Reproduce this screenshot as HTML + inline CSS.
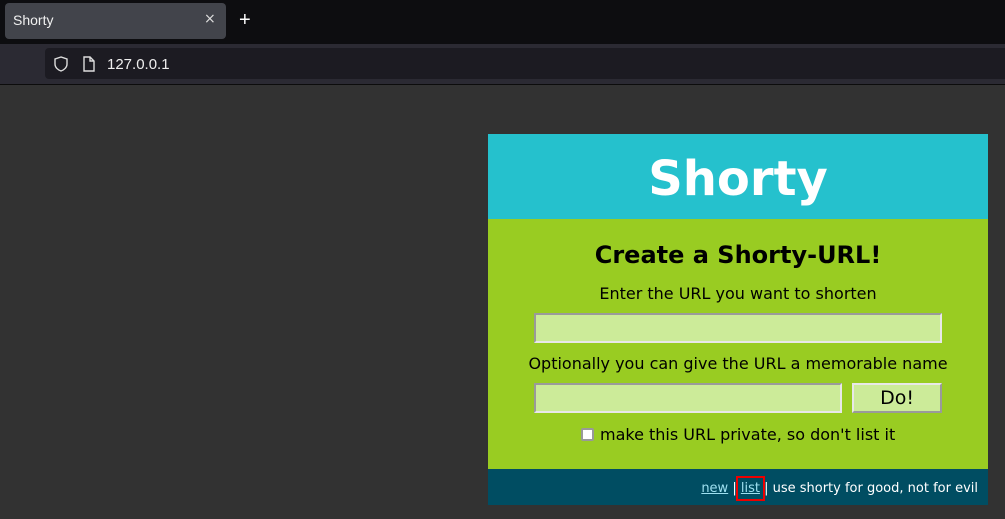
<!DOCTYPE html>
<html><head><style>
body{margin:0;width:1005px;height:519px;background:#323232;font-family:"DejaVu Sans","Liberation Sans",sans-serif;position:relative;overflow:hidden}
.a{position:absolute}
</style></head><body>
<div class="a" style="left:0;top:0;width:1005px;height:44px;background:#0d0d10"></div>
<div class="a" style="left:5px;top:3px;width:221px;height:36px;background:#42444b;border-radius:4px"></div>
<div class="a" style="left:13px;top:12px;color:#f0f0f0;font-size:14px;font-family:'Liberation Sans',sans-serif">Shorty</div>
<div class="a" style="left:204px;top:11px;color:#ddd;font-size:14px">×</div>
<div class="a" style="left:239px;top:9px;color:#fff;font-size:20px;font-family:'Liberation Sans',sans-serif">+</div>
<div class="a" style="left:0;top:44px;width:1005px;height:40px;background:#2b2a33"></div>
<div class="a" style="left:45px;top:48px;width:960px;height:31px;background:#1c1b22;border-radius:4px 0 0 4px"></div>
<svg class="a" style="left:52px;top:55px" width="18" height="18" viewBox="0 0 18 18"><path d="M9 2L3 4v5c0 3.5 3 6 6 7 3-1 6-3.5 6-7V4z" fill="none" stroke="#ddd" stroke-width="1.4"/></svg>
<svg class="a" style="left:81px;top:55px" width="16" height="18" viewBox="0 0 16 18"><path d="M3 2h6l4 4v10H3z M9 2v4h4" fill="none" stroke="#ddd" stroke-width="1.4"/></svg>
<div class="a" style="left:107px;top:56px;color:#eee;font-size:15px;font-family:'Liberation Sans',sans-serif">127.0.0.1</div>
<div class="a" style="left:0;top:84px;width:1005px;height:1px;background:#0c0c0c"></div>

<div class="a" style="left:488px;top:134px;width:500px;height:85px;background:#25c1cd"></div>
<div class="a" style="left:488px;top:151px;width:500px;text-align:center;color:#fff;font-size:48px;font-weight:bold">Shorty</div>
<div class="a" style="left:488px;top:219px;width:500px;height:250px;background:#99cc22"></div>
<div class="a" style="left:488px;top:241px;width:500px;text-align:center;font-size:24px;font-weight:bold;color:#000">Create a Shorty-URL!</div>
<div class="a" style="left:488px;top:284px;width:500px;text-align:center;font-size:16px;color:#000">Enter the URL you want to shorten</div>
<div class="a" style="left:534px;top:313px;background:#cceb99;border:2px solid;border-color:#9a9a9a #e8e8e8 #e8e8e8 #9a9a9a;box-sizing:border-box;width:408px;height:30px"></div>
<div class="a" style="left:488px;top:354px;width:500px;text-align:center;font-size:16px;color:#000">Optionally you can give the URL a memorable name</div>
<div class="a" style="left:534px;top:383px;width:308px;height:30px;background:#cceb99;border:2px solid;border-color:#9a9a9a #e8e8e8 #e8e8e8 #9a9a9a;box-sizing:border-box"></div>
<div class="a" style="left:852px;top:383px;width:90px;height:30px;background:#cceb99;border:2px solid;border-color:#e8e8e8 #9a9a9a #9a9a9a #e8e8e8;box-sizing:border-box;text-align:center;font-size:19px;line-height:27px;color:#000">Do!</div>
<div class="a" style="left:581px;top:428px;width:13px;height:13px;background:#fff;border:2px solid #999;border-radius:2px;box-sizing:border-box"></div>
<div class="a" style="left:600px;top:425px;font-size:16px;color:#000">make this URL private, so don't list it</div>
<div class="a" style="left:488px;top:469px;width:500px;height:36px;background:#004d62"></div>
<div class="a" style="left:488px;top:481px;width:490px;text-align:right;font-size:13px;color:#fff;white-space:nowrap"><span style="color:#9ee0f0;text-decoration:underline">new</span> | <span style="color:#9ee0f0;text-decoration:underline;outline:2px solid #e00;outline-offset:3px">list</span> | use shorty for good, not for evil</div>
</body></html>
